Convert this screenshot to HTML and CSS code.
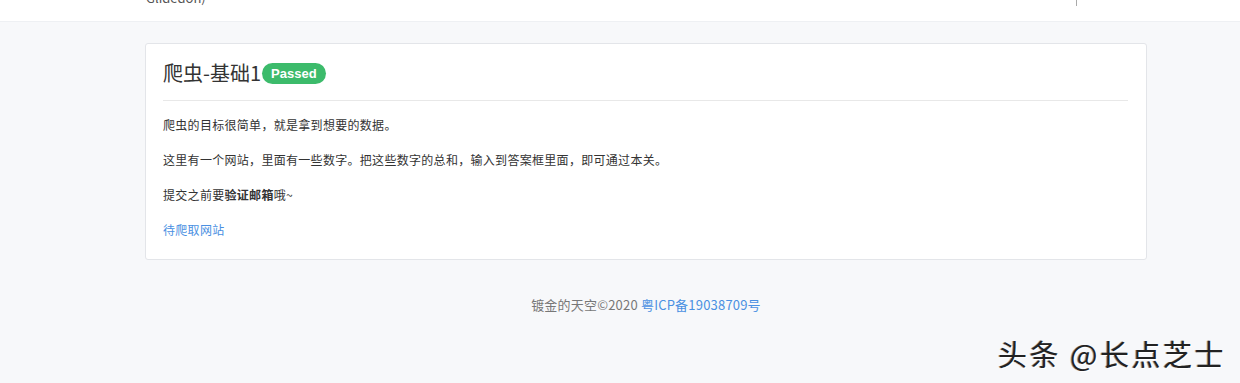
FILE: index.html
```html
<!DOCTYPE html>
<html lang="zh-CN">
<head>
  <meta charset="UTF-8" />
  <title>爬虫-基础1</title>
  <link rel="stylesheet" href="styles.css">
</head>
<body>
  <header class="navbar">
    <div class="navbar-inner">
      <span class="brand">Glidedon)</span>
      <span class="nav-sep"></span>
    </div>
  </header>

  <main class="container">
    <section class="card">
      <h2 class="card-title">爬虫-基础1<span class="badge">Passed</span></h2>
      <div class="card-body">
        <p>爬虫的目标很简单，就是拿到想要的数据。</p>
        <p>这里有一个网站，里面有一些数字。把这些数字的总和，输入到答案框里面，即可通过本关。</p>
        <p>提交之前要<b>验证邮箱</b>哦~</p>
        <p><a href="#">待爬取网站</a></p>
      </div>
    </section>

    <footer class="footer">
      镀金的天空©2020 <a href="#">粤ICP备19038709号</a>
    </footer>
  </main>

  <div class="watermark">头条 @长点芝士</div>
</body>
</html>
```

FILE: styles.css
```css
body {
  margin: 0;
  background-color: #f7f8fa;
  font-family: "Noto Sans CJK SC", "Noto Sans", sans-serif;
  color: #333;
  font-size: 12px;
}

a {
  color: #4a90e2;
  text-decoration: none;
}

.navbar {
  height: 21px;
  background: #fff;
  border-bottom: 1px solid #eef0f3;
  overflow: hidden;
}

.navbar-inner {
  display: flex;
  align-items: flex-start;
  margin: -10px 0 0 146px;
  width: 931px;
  justify-content: space-between;
}

.brand {
  font-size: 13px;
  line-height: 16px;
  color: #555;
}

.nav-sep {
  width: 1px;
  height: 16px;
  background: #aaa;
}

.container {
  width: 1002px;
  margin: 21px 0 0 145px;
}

.card {
  background: #fff;
  border: 1px solid #e3e5e9;
  border-radius: 3px;
  padding: 14px 18px 19px 17px;
}

.card-title {
  margin: 0;
  display: flex;
  align-items: center;
  font-size: 20px;
  font-weight: normal;
  line-height: 30px;
  color: #333;
  padding-bottom: 12px;
  border-bottom: 1px solid #e8e8e8;
}

.badge {
  display: inline-block;
  margin-left: 1px;
  padding: 0 9px;
  height: 21px;
  line-height: 21px;
  border-radius: 11px;
  background: #3cbb6b;
  color: #fff;
  font-family: "Liberation Sans", Arial, sans-serif;
  font-size: 13px;
  font-weight: bold;
}

.card-body {
  padding-top: 14px;
}

.card-body p {
  margin: 0 0 15px;
  line-height: 20px;
  letter-spacing: 0.3px;
}

.card-body p:last-child {
  margin-bottom: 0;
}

.footer {
  text-align: center;
  color: #777;
  font-size: 13px;
  letter-spacing: 0.2px;
  margin-top: 35px;
  line-height: 20px;
}

.watermark {
  position: absolute;
  right: 14px;
  top: 336px;
  font-size: 29px;
  line-height: 34px;
  color: #222;
  letter-spacing: 2.5px;
  text-shadow: 1px 1px 0 #fff, -1px 0 0 #999;
}
```
